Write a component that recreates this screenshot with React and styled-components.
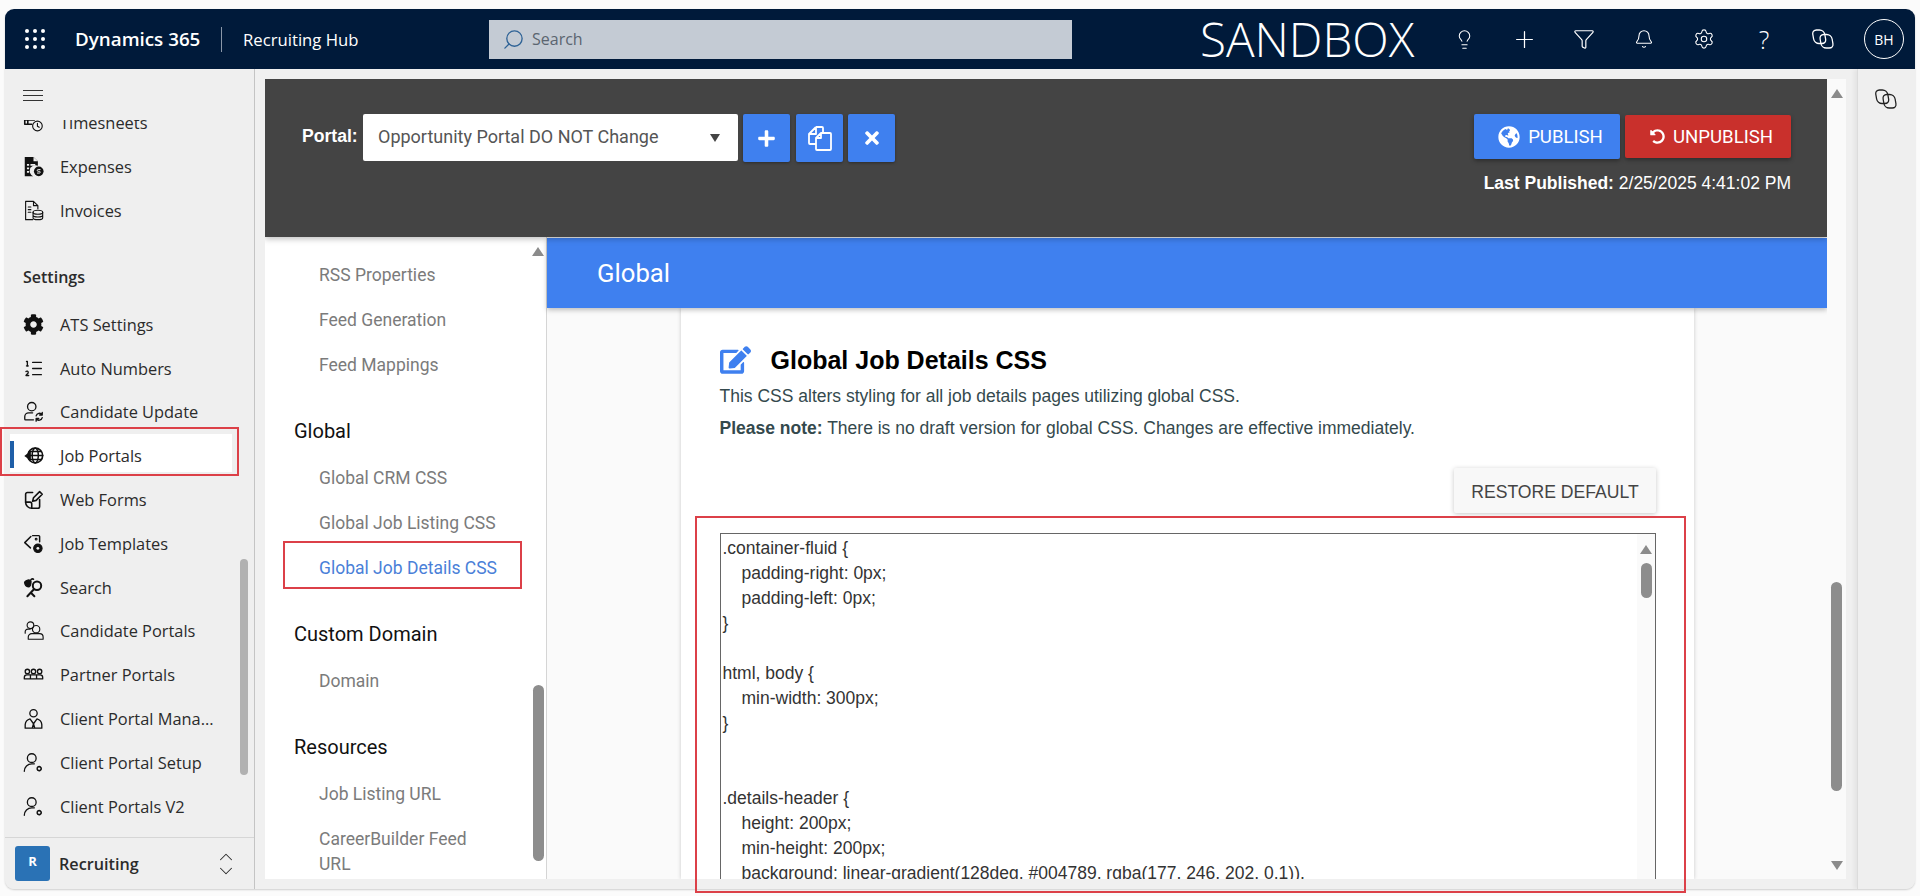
import React from "react";
import styled, { createGlobalStyle } from "styled-components";
import { Lightbulb, Plus, Funnel, Bell, Settings, Search as SearchGlyph, ChevronUp, ChevronDown, ListOrdered } from "lucide-react";
import { FaCog, FaPlus, FaTimes, FaEdit, FaGlobeAmericas, FaUndoAlt } from "react-icons/fa";

const Global = createGlobalStyle`
  * { box-sizing: border-box; }
  html, body { margin: 0; height: 100%; overflow: hidden; background: #fbfbfb; }
`;

const Page = styled.div`
  position: relative;
  width: 1920px;
  height: 896px;
  padding: 9px 5px 7px 5px;
`;
const Frame = styled.div`
  height: 880px;
  display: flex;
  flex-direction: column;
  border-radius: 9px;
  overflow: hidden;
  background: #f0f0f0;
  box-shadow: 0 1px 2px rgba(0, 0, 0, 0.18);
`;

/* top nav */
const Nav = styled.header`
  height: 60px;
  flex: none;
  display: flex;
  align-items: center;
  background: #001a3a;
  color: #fff;
  font-family: "Open Sans", sans-serif;
`;
const Waffle = styled.div`
  width: 20px;
  margin-left: 20px;
  display: grid;
  grid-template-columns: repeat(3, 4px);
  gap: 4px;
  span { width: 4px; height: 4px; border-radius: 50%; background: #fff; }
`;
const Product = styled.div`
  margin-left: 30px;
  width: 146px;
  font-size: 18.8px;
  font-weight: 600;
  white-space: nowrap;
`;
const NavDivider = styled.div`
  width: 1px;
  height: 25px;
  background: #8a97a8;
`;
const AppName = styled.div`
  margin-left: 21px;
  width: 246px;
  font-size: 16.7px;
  white-space: nowrap;
`;
const SearchBox = styled.div`
  width: 583px;
  height: 39px;
  display: flex;
  align-items: center;
  gap: 7px;
  padding-left: 13px;
  background: #c4cbd4;
  color: #5b6570;
  font-size: 16px;
  svg { transform: scaleX(-1); color: #2f6396; }
`;
const Env = styled.div`
  margin-left: 128px;
  width: 214px;
  font-size: 47.6px;
  font-weight: 300;
  line-height: 60px;
  white-space: nowrap;
`;
const NavIcons = styled.div`
  margin-left: 20px;
  display: flex;
  align-items: center;
`;
const NavIcon = styled.div`
  width: 60px;
  height: 40px;
  display: flex;
  align-items: center;
  justify-content: center;
  font-size: 25px;
  font-weight: 300;
`;
const Avatar = styled.div`
  width: 40px;
  height: 40px;
  margin-left: 10px;
  border: 1px solid #fff;
  border-radius: 50%;
  display: flex;
  align-items: center;
  justify-content: center;
  font-size: 14px;
`;

/* left sitemap */
const Workspace = styled.div`
  flex: 1;
  min-height: 0;
  display: flex;
`;
const Sitemap = styled.aside`
  width: 250px;
  flex: none;
  display: flex;
  flex-direction: column;
  background: #efefef;
  border-right: 1px solid #c4c4c4;
  font-family: "Open Sans", sans-serif;
  color: #2b2b2b;
`;
const Burger = styled.div`
  height: 51px;
  flex: none;
  padding: 21px 0 0 18px;
  span { display: block; width: 20px; height: 1px; background: #333; margin-bottom: 4px; }
`;
const SitemapScroll = styled.div`
  position: relative;
  flex: 1;
  min-height: 0;
  overflow: hidden;
`;
const SitemapList = styled.div`
  margin-top: -19px;
`;
const SitemapItem = styled.div`
  position: relative;
  height: 43.8px;
  display: flex;
  align-items: center;
  gap: 16.5px;
  padding-left: 18px;
  font-size: 16.4px;
  white-space: nowrap;
  svg { width: 21px; height: 21px; flex: none; color: #111; margin-left: -0.5px; }
  ${(p) => p.$active && `
    margin-right: 22px;
    background: linear-gradient(#fff, #fff) 5px 0 / calc(100% - 5px) 38px no-repeat;
    &:before {
      content: "";
      position: absolute;
      left: 5px;
      top: 7px;
      width: 4px;
      height: 27px;
      background: #1f5fa8;
    }
  `}
`;
const SitemapHeading = styled.div`
  height: 44px;
  margin: 23px 0 3px;
  padding-left: 18px;
  display: flex;
  align-items: center;
  font-size: 16px;
  font-weight: 600;
`;
const SitemapThumb = styled.div`
  position: absolute;
  right: 6px;
  top: 439px;
  width: 8px;
  height: 216px;
  border-radius: 4px;
  background: #b1b1b1;
`;
const AreaSwitch = styled.div`
  height: 52px;
  flex: none;
  display: flex;
  align-items: center;
  padding: 0 17px 0 10px;
  border-top: 1px solid #d6d6d6;
  font-size: 16.2px;
  font-weight: 600;
`;
const AreaBadge = styled.div`
  width: 35px;
  height: 35px;
  margin-right: 9px;
  border-radius: 3px;
  background: #2a72b5;
  color: #fff;
  font-size: 13px;
  font-weight: 700;
  display: flex;
  align-items: center;
  justify-content: center;
  padding-bottom: 6px;
`;
const AreaArrows = styled.div`
  margin-left: auto;
  display: flex;
  flex-direction: column;
  svg { display: block; margin: -4px 0; }
`;

/* main stage */
const Stage = styled.main`
  flex: 1;
  min-width: 0;
  padding: 10px 11px 10px 10px;
  display: flex;
`;
const Content = styled.div`
  flex: 1;
  min-width: 0;
  display: flex;
  flex-direction: column;
  overflow: hidden;
`;
const ScrollTrack = styled.div`
  width: ${(p) => p.$width}px;
  flex: none;
  display: flex;
  flex-direction: column;
  align-items: center;
  padding-top: ${(p) => p.$top}px;
  background: ${(p) => p.$bg};
`;
const ArrowUp = styled.div`
  flex: none;
  width: 0;
  height: 0;
  border-left: 6px solid transparent;
  border-right: 6px solid transparent;
  border-bottom: 9px solid #8b8b8b;
`;
const ArrowDown = styled(ArrowUp)`
  margin-top: auto;
  margin-bottom: 9px;
  border-bottom: 0;
  border-top: 9px solid #8b8b8b;
`;
const Thumb = styled.div`
  flex: none;
  width: 11px;
  height: ${(p) => p.$height}px;
  margin-top: ${(p) => p.$offset}px;
  border-radius: 5.5px;
  background: #8d8d8d;
`;
const SideRail = styled.div`
  width: 58px;
  flex: none;
  display: flex;
  justify-content: center;
  padding-top: 18px;
  background: #efefef;
  border-left: 1px solid #dcdcdc;
  box-shadow: -3px 0 4px rgba(0, 0, 0, 0.05);
  color: #222;
`;

/* dark toolbar */
const TopBar = styled.div`
  height: 158px;
  flex: none;
  position: relative;
  z-index: 2;
  display: flex;
  justify-content: space-between;
  padding: 35px 36px 0 37px;
  background: #444;
  box-shadow: 0 2px 6px rgba(0, 0, 0, 0.25);
  font-family: "Roboto", sans-serif;
`;
const PortalGroup = styled.div`
  display: flex;
  align-items: flex-start;
`;
const PortalLabel = styled.label`
  width: 61px;
  height: 44px;
  display: flex;
  align-items: center;
  font-family: "Liberation Sans", sans-serif;
  font-size: 17.6px;
  font-weight: 700;
  color: #fff;
`;
const PortalSelect = styled.div`
  width: 375px;
  height: 47px;
  display: flex;
  align-items: center;
  justify-content: space-between;
  padding: 0 18px 2px 15px;
  background: #fff;
  border-radius: 2px;
  color: #555;
  font-size: 18px;
  &:after {
    content: "";
    margin-top: 3px;
    border-left: 5px solid transparent;
    border-right: 5px solid transparent;
    border-top: 8px solid #444;
  }
`;
const IconButton = styled.button`
  width: 47px;
  height: 48px;
  margin-left: ${(p) => p.$gap}px;
  padding: 0;
  border: 0;
  border-radius: 2px;
  display: flex;
  align-items: center;
  justify-content: center;
  background: #3f80ef;
  color: #fff;
  font-size: 22px;
  box-shadow: 0 1px 3px rgba(0, 0, 0, 0.35);
`;
const PublishGroup = styled.div`
  display: flex;
  flex-direction: column;
  align-items: flex-end;
`;
const PublishRow = styled.div`
  display: flex;
  align-items: center;
  gap: 5px;
`;
const PublishButton = styled.button`
  height: ${(p) => p.$height}px;
  width: ${(p) => p.$width}px;
  padding: 0 0 0 7px;
  border: 0;
  border-radius: 2px;
  display: flex;
  align-items: center;
  justify-content: center;
  gap: ${(p) => p.$gap}px;
  background: ${(p) => p.$bg};
  color: #fff;
  font-family: "Roboto", sans-serif;
  font-size: 18.6px;
  box-shadow: 0 2px 4px rgba(0, 0, 0, 0.35);
`;
const LastPublished = styled.div`
  margin-top: 14px;
  font-family: "Liberation Sans", sans-serif;
  font-size: 17.5px;
  color: #fff;
  white-space: nowrap;
  b { font-weight: 700; }
`;

/* settings body */
const Body = styled.div`
  flex: 1;
  min-height: 0;
  display: flex;
`;
const SideNav = styled.nav`
  width: 282px;
  flex: none;
  display: flex;
  background: #fff;
  border-right: 1px solid #d5d5d5;
  font-family: "Roboto", sans-serif;
`;
const SideNavList = styled.div`
  flex: 1;
  padding-top: 15.5px;
`;
const GroupTitle = styled.div`
  height: 40px;
  margin: 23px 0 5px;
  padding-left: 29px;
  display: flex;
  align-items: center;
  color: #111;
  font-size: 20px;
`;
const GroupItem = styled.div`
  padding: 10px 0 10px 54px;
  line-height: 25px;
  color: ${(p) => (p.$active ? "#4a7fd8" : "#7b7b7b")};
  font-size: 17.5px;
  white-space: nowrap;
`;
const Panel = styled.div`
  flex: 1;
  min-width: 0;
  display: flex;
  flex-direction: column;
  padding-top: 1px;
  background: #fafafa;
`;
const PanelBar = styled.div`
  height: 70px;
  flex: none;
  position: relative;
  z-index: 1;
  display: flex;
  align-items: center;
  padding-left: 50px;
  background: #3f80ef;
  color: #fff;
  font-family: "Roboto", sans-serif;
  font-size: 25.7px;
  box-shadow: 0 2px 5px rgba(0, 0, 0, 0.25);
`;
const Card = styled.section`
  flex: 1;
  min-height: 0;
  width: 1013px;
  margin-left: 134px;
  display: flex;
  flex-direction: column;
  overflow: hidden;
  padding: 36px 38px 0 38.5px;
  background: #fff;
  box-shadow: 0 0 4px rgba(0, 0, 0, 0.2);
  font-family: "Liberation Sans", sans-serif;
`;
const CardTitle = styled.h2`
  height: 32px;
  margin: 0;
  display: flex;
  align-items: center;
  gap: 20px;
  color: #000;
  font-size: 25px;
  font-weight: 700;
  svg { width: 31px; height: 28px; color: #3f80ef; }
`;
const CardText = styled.p`
  margin: 8px 0 0;
  line-height: 24px;
  color: #34494d;
  font-size: 17.5px;
  white-space: nowrap;
`;
const RestoreButton = styled.button`
  align-self: flex-end;
  width: 202px;
  height: 45px;
  margin: 28px 0 0;
  padding: 4px 0 0;
  border: 0;
  border-radius: 2px;
  background: #f8f8f8;
  color: #444;
  font-family: "Liberation Sans", sans-serif;
  font-size: 17.6px;
  box-shadow: 0 1px 5px rgba(0, 0, 0, 0.22);
`;
const CodeBox = styled.div`
  flex: 1;
  min-height: 0;
  margin-top: 20px;
  display: flex;
  border: 1px solid #666;
  border-bottom: 0;
  overflow: hidden;
`;
const CodeText = styled.div`
  flex: 1;
  padding: 2px 0 0 2px;
  color: #333;
  font-size: 17.5px;
  line-height: 25px;
  white-space: nowrap;
`;
const CodeLine = styled.div`
  height: 25px;
  padding-left: ${(p) => (p.$indent ? 19 : 0)}px;
`;

/* red review boxes drawn on top of the screenshot */
const Callout = styled.div`
  position: absolute;
  left: ${(p) => p.$x}px;
  top: ${(p) => p.$y}px;
  width: ${(p) => p.$w}px;
  height: ${(p) => p.$h}px;
  border: 2px solid #dc4048;
  pointer-events: none;
`;

const line = { fill: "none", stroke: "currentColor", strokeWidth: 1.3, strokeLinecap: "round", strokeLinejoin: "round" };

const Copilot = ({ size = 24 }) => (
  <svg width={size} height={size} viewBox="0 0 24 24" {...line}>
    <rect x="1.500" y="3" width="12" height="13.500" rx="4.500" transform="skewX(10) translate(-2 0)" />
    <rect x="8" y="7.500" width="12" height="13.500" rx="4.500" transform="skewX(10) translate(-2 0)" />
  </svg>
);

const CopyDocs = () => (
  <svg width="26" height="26" viewBox="0 0 26 26" fill="none" stroke="currentColor" strokeWidth="1.800" strokeLinejoin="round">
    <path d="M9 2h6a1 1 0 0 1 1 1V8M9 2 2 9v9a1 1 0 0 0 1 1H9M9 2v7H2" />
    <path d="M14 8H23a1 1 0 0 1 1 1V24a1 1 0 0 1-1 1H10a1 1 0 0 1-1-1V13zM14 8v5H9" />
  </svg>
);

const Glyph = ({ children }) => (
  <svg viewBox="0 0 24 24" {...line}>{children}</svg>
);

const SolidGlyph = ({ children }) => (
  <svg viewBox="0 0 24 24" fill="currentColor">{children}</svg>
);

const icons = {
  timesheets: (
    <Glyph>
      <path d="M2 5h13M2 5v9h8M2 9h11M5.500 5v9M9 5v4" strokeWidth="1.800" />
      <circle cx="16.500" cy="16" r="5.500" />
      <path d="M16.500 13v3.200l2 1.300" />
    </Glyph>
  ),
  expenses: (
    <SolidGlyph>
      <path d="M2 1h10l5 5v5.200a6.500 6.500 0 0 0-5.500 11.800H2z" />
      <path d="M12 1v5h5" fill="#efefef" />
      <circle cx="18" cy="17.500" r="5.500" />
      <path d="M4.500 9h2.500v2H4.500zM8.500 9H14v2H8.500zM4.500 13H7v2H4.500zM8.500 13H12v2H8.500zM4.500 17H7v2H4.500z" fill="#efefef" />
      <path d="M20 15.500h-2.700a1 1 0 0 0 0 2h1.400a1 1 0 0 1 0 2H16" fill="none" stroke="#efefef" strokeWidth="1.100" />
    </SolidGlyph>
  ),
  invoices: (
    <Glyph>
      <path d="M11 22.500H3V1.500h9l5 5v3.500M12 1.500v5h5M6 8h3M6 11h3M6 14h3" />
      <ellipse cx="17" cy="14" rx="5.500" ry="2.300" />
      <path d="M11.500 14v6.200c0 1.200 2.500 2.300 5.500 2.300s5.500-1.100 5.500-2.300V14M11.500 17.100c0 1.200 2.500 2.300 5.500 2.300s5.500-1.100 5.500-2.300" />
    </Glyph>
  ),
  candidateUpdate: (
    <Glyph>
      <circle cx="10" cy="6.500" r="4.800" strokeWidth="1.500" />
      <path d="M11 13.500H6.500A4.500 4.500 0 0 0 2 18v2.500a1 1 0 0 0 1 1h9" strokeWidth="1.500" />
      <path d="M15 17a4 4 0 0 1 7-1.500M22 19a4 4 0 0 1-7 1.500M22 13v3h-3M15 23v-3h3" strokeWidth="1.500" />
    </Glyph>
  ),
  jobPortals: (
    <Glyph>
      <circle cx="14" cy="12" r="8.500" strokeWidth="1.900" />
      <ellipse cx="14" cy="12" rx="3.500" ry="8.500" strokeWidth="1.700" />
      <path d="M5.500 12h17M7 7.500h14M7 16.500h14" strokeWidth="1.700" />
      <path d="M9 6.500 1.500 12.500 9 18z" fill="currentColor" stroke="none" />
    </Glyph>
  ),
  webForms: (
    <Glyph>
      <path d="M11 4H5a2 2 0 0 0-2 2v9a7 7 0 0 0 7 7h7a2 2 0 0 0 2-2v-8" strokeWidth="1.800" />
      <path d="M3 15h5a2 2 0 0 1 2 2v5" strokeWidth="1.800" />
      <path d="M11 14l1-4 7-7 3 3-7 7z" strokeWidth="1.800" />
    </Glyph>
  ),
  jobTemplates: (
    <Glyph>
      <path d="M9 4 2 11l6.500 6M11 3h7a1 1 0 0 1 1 1v6" strokeWidth="1.700" />
      <circle cx="17" cy="17.500" r="4.800" fill="currentColor" />
      <circle cx="17" cy="17.500" r="1.600" fill="#efefef" stroke="none" />
      <circle cx="15" cy="7" r="1" />
    </Glyph>
  ),
  search: (
    <Glyph>
      <circle cx="16" cy="10" r="4.800" strokeWidth="2.300" />
      <path d="M12.500 14 5 22M9 18l4 4" strokeWidth="2.300" />
      <path d="M2 6c2-3 5-3 7-1 0 3-1 6-3 6S2 9 2 6zM9 3.500c0-1 2-2 3-1" fill="currentColor" strokeWidth="1.800" />
    </Glyph>
  ),
  candidatePortals: (
    <Glyph>
      <circle cx="8.500" cy="6" r="3.800" />
      <circle cx="15" cy="10.500" r="4.200" />
      <path d="M2.500 15v-1.500a3 3 0 0 1 3-3H8M6 22v-2.500a4 4 0 0 1 4-4h9a4 4 0 0 1 4 4V22z" />
    </Glyph>
  ),
  partnerPortals: (
    <Glyph>
      <circle cx="5" cy="8.500" r="2.500" strokeWidth="1.500" />
      <circle cx="12" cy="8.500" r="2.500" strokeWidth="1.500" />
      <circle cx="19" cy="8.500" r="2.500" strokeWidth="1.500" />
      <path d="M1.500 17v-1.500a3 3 0 0 1 3-3h15a3 3 0 0 1 3 3V17zM8.500 17v-4.500M15.500 17v-4.500" strokeWidth="1.500" />
    </Glyph>
  ),
  clientManage: (
    <Glyph>
      <circle cx="12" cy="6" r="4.200" strokeWidth="1.500" />
      <path d="M2.500 23v-4a7.500 7.500 0 0 1 5.500-6.500l4 5.500 4-5.500a7.500 7.500 0 0 1 5.500 6.500v4zM12 18l-1.500 5M12 18l1.500 5" strokeWidth="1.500" />
    </Glyph>
  ),
  clientSetup: (
    <Glyph>
      <circle cx="10" cy="7" r="5" strokeWidth="1.500" />
      <path d="M1.500 22a8.500 8.500 0 0 1 8.500-8.500h3" strokeWidth="1.500" />
      <circle cx="18.500" cy="19" r="2.300" strokeWidth="1.800" strokeDasharray="1.600 0.800" />
    </Glyph>
  ),
};

const workItems = [
  { label: "ATS Settings", icon: <FaCog /> },
  { label: "Auto Numbers", icon: <ListOrdered strokeWidth={1.5} /> },
  { label: "Candidate Update", icon: icons.candidateUpdate },
  { label: "Job Portals", icon: icons.jobPortals, active: true },
  { label: "Web Forms", icon: icons.webForms },
  { label: "Job Templates", icon: icons.jobTemplates },
  { label: "Search", icon: icons.search },
  { label: "Candidate Portals", icon: icons.candidatePortals },
  { label: "Partner Portals", icon: icons.partnerPortals },
  { label: "Client Portal Mana...", icon: icons.clientManage },
  { label: "Client Portal Setup", icon: icons.clientSetup },
  { label: "Client Portals V2", icon: icons.clientSetup },
];

const css = [
  [".container-fluid {"],
  ["padding-right: 0px;", true],
  ["padding-left: 0px;", true],
  ["}"],
  [""],
  ["html, body {"],
  ["min-width: 300px;", true],
  ["}"],
  [""],
  [""],
  [".details-header {"],
  ["height: 200px;", true],
  ["min-height: 200px;", true],
  ["background: linear-gradient(128deg, #004789, rgba(177, 246, 202, 0.1)),", true],
];

export default function App() {
  return (
    <Page>
      <Global />
      <Frame>
        <Nav>
          <Waffle>{Array.from({ length: 9 }, (_, i) => <span key={i} />)}</Waffle>
          <Product>Dynamics 365</Product>
          <NavDivider />
          <AppName>Recruiting Hub</AppName>
          <SearchBox>
            <SearchGlyph size={23} strokeWidth={1.4} />
            Search
          </SearchBox>
          <Env>SANDBOX</Env>
          <NavIcons>
            <NavIcon><Lightbulb size={21} strokeWidth={1.2} /></NavIcon>
            <NavIcon><Plus size={27} strokeWidth={1.1} /></NavIcon>
            <NavIcon><Funnel size={22} strokeWidth={1.3} /></NavIcon>
            <NavIcon><Bell size={20} strokeWidth={1.3} /></NavIcon>
            <NavIcon><Settings size={22} strokeWidth={1.2} /></NavIcon>
            <NavIcon>?</NavIcon>
            <NavIcon><Copilot /></NavIcon>
          </NavIcons>
          <Avatar>BH</Avatar>
        </Nav>
        <Workspace>
          <Sitemap>
            <Burger><span /><span /><span /></Burger>
            <SitemapScroll>
              <SitemapList>
                <SitemapItem>{icons.timesheets}Timesheets</SitemapItem>
                <SitemapItem>{icons.expenses}Expenses</SitemapItem>
                <SitemapItem>{icons.invoices}Invoices</SitemapItem>
                <SitemapHeading>Settings</SitemapHeading>
                {workItems.map((item) => (
                  <SitemapItem key={item.label} $active={item.active}>
                    {item.icon}
                    {item.label}
                  </SitemapItem>
                ))}
              </SitemapList>
              <SitemapThumb />
            </SitemapScroll>
            <AreaSwitch>
              <AreaBadge>R</AreaBadge>
              Recruiting
              <AreaArrows>
                <ChevronUp size={22} strokeWidth={1.1} />
                <ChevronDown size={22} strokeWidth={1.1} />
              </AreaArrows>
            </AreaSwitch>
          </Sitemap>
          <Stage>
            <Content>
              <TopBar>
                <PortalGroup>
                  <PortalLabel>Portal:</PortalLabel>
                  <PortalSelect>Opportunity Portal DO NOT Change</PortalSelect>
                  <IconButton $gap={5}><FaPlus size={19} /></IconButton>
                  <IconButton $gap={6}><CopyDocs /></IconButton>
                  <IconButton $gap={5}><FaTimes size={20} /></IconButton>
                </PortalGroup>
                <PublishGroup>
                  <PublishRow>
                    <PublishButton $bg="#3f80ef" $width={146} $height={45} $gap={8}>
                      <FaGlobeAmericas size={22} /> PUBLISH
                    </PublishButton>
                    <PublishButton $bg="#c9302c" $width={166} $height={43} $gap={8}>
                      <FaUndoAlt size={15} /> UNPUBLISH
                    </PublishButton>
                  </PublishRow>
                  <LastPublished><b>Last Published:</b> 2/25/2025 4:41:02 PM</LastPublished>
                </PublishGroup>
              </TopBar>
              <Body>
                <SideNav>
                  <SideNavList>
                    <GroupItem>RSS Properties</GroupItem>
                    <GroupItem>Feed Generation</GroupItem>
                    <GroupItem>Feed Mappings</GroupItem>
                    <GroupTitle>Global</GroupTitle>
                    <GroupItem>Global CRM CSS</GroupItem>
                    <GroupItem>Global Job Listing CSS</GroupItem>
                    <GroupItem $active>Global Job Details CSS</GroupItem>
                    <GroupTitle>Custom Domain</GroupTitle>
                    <GroupItem>Domain</GroupItem>
                    <GroupTitle>Resources</GroupTitle>
                    <GroupItem>Job Listing URL</GroupItem>
                    <GroupItem>CareerBuilder Feed<br />URL</GroupItem>
                  </SideNavList>
                  <ScrollTrack $width={16} $top={10} $bg="transparent">
                    <ArrowUp />
                    <Thumb $height={176} $offset={429} />
                  </ScrollTrack>
                </SideNav>
                <Panel>
                  <PanelBar>Global</PanelBar>
                  <Card>
                    <CardTitle><FaEdit />Global Job Details CSS</CardTitle>
                    <CardText>This CSS alters styling for all job details pages utilizing global CSS.</CardText>
                    <CardText><b>Please note:</b> There is no draft version for global CSS. Changes are effective immediately.</CardText>
                    <RestoreButton>RESTORE DEFAULT</RestoreButton>
                    <CodeBox>
                      <CodeText>
                        {css.map(([text, indent], i) => (
                          <CodeLine key={i} $indent={indent}>{text}</CodeLine>
                        ))}
                      </CodeText>
                      <ScrollTrack $width={18} $top={11} $bg="#fafafa">
                        <ArrowUp />
                        <Thumb $height={35} $offset={9} />
                      </ScrollTrack>
                    </CodeBox>
                  </Card>
                </Panel>
              </Body>
            </Content>
            <ScrollTrack $width={19} $top={10} $bg="#fafafa">
              <ArrowUp />
              <Thumb $height={209} $offset={484} />
              <ArrowDown />
            </ScrollTrack>
          </Stage>
          <SideRail><Copilot /></SideRail>
        </Workspace>
      </Frame>
      <Callout $x={0} $y={427} $w={239} $h={49} />
      <Callout $x={283} $y={541} $w={239} $h={48} />
      <Callout $x={695} $y={516} $w={991} $h={377} />
    </Page>
  );
}
